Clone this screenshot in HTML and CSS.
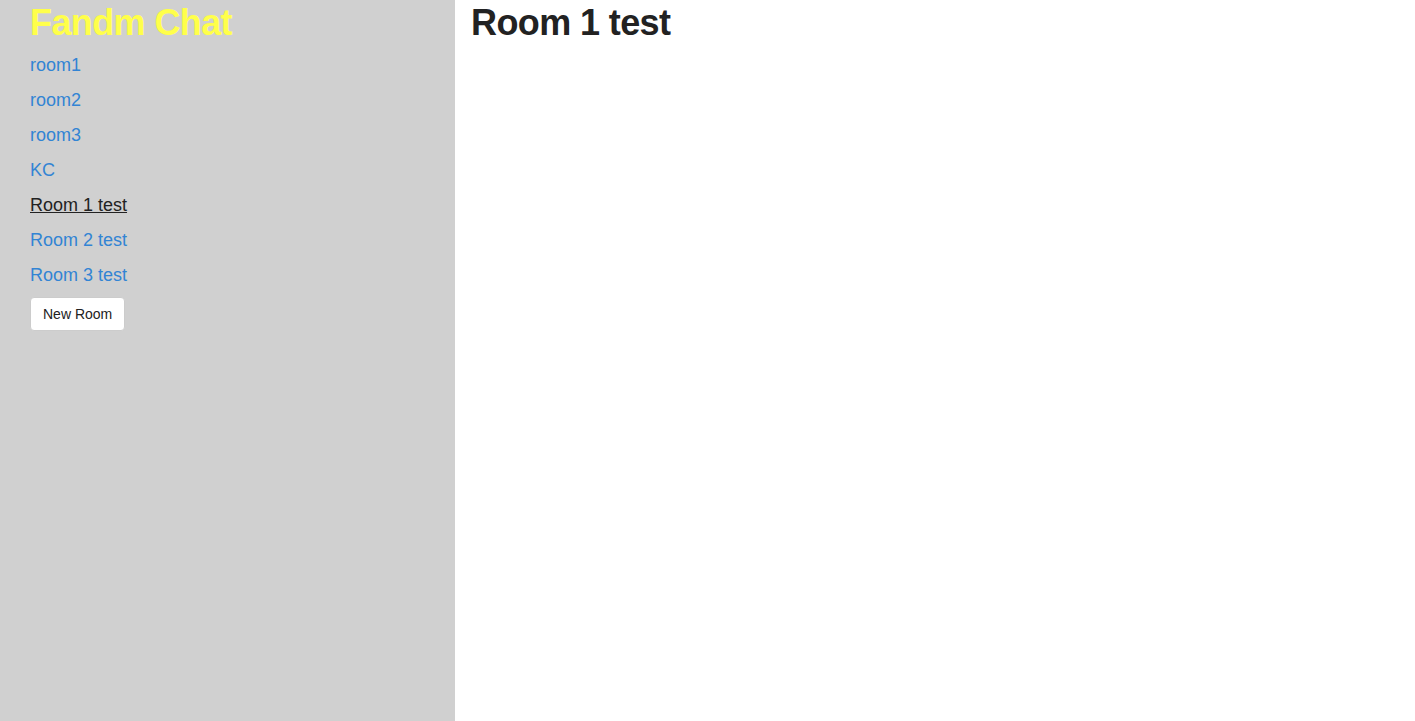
FILE: index.html
```html
<!DOCTYPE html>
<html>
<head>
<meta charset="utf-8">
<title>Fandm Chat</title>
<link rel="stylesheet" href="styles.css">
</head>
<body>
<div class="app">
  <aside class="sidebar">
    <h1 class="brand">Fandm Chat</h1>
    <ul class="rooms">
      <li><a href="#">room1</a></li>
      <li><a href="#">room2</a></li>
      <li><a href="#">room3</a></li>
      <li><a href="#">KC</a></li>
      <li><a href="#" class="active">Room 1 test</a></li>
      <li><a href="#">Room 2 test</a></li>
      <li><a href="#">Room 3 test</a></li>
    </ul>
    <button class="btn">New Room</button>
  </aside>
  <main class="main">
    <h1 class="room-title">Room 1 test</h1>
  </main>
</div>
</body>
</html>
```
FILE: styles.css
```css
html, body {
  margin: 0;
  padding: 0;
  height: 100%;
}
body {
  font-family: "Liberation Sans", Arial, sans-serif;
  color: #333;
  background: #fff;
}
.app {
  display: flex;
  height: 100%;
}
.sidebar {
  width: 455px;
  flex: none;
  background: #d0d0d0;
  padding: 3px 30px 0;
  box-sizing: border-box;
}
.brand {
  margin: 0 0 5px;
  font-size: 36px;
  line-height: 1.1;
  font-weight: 700;
  letter-spacing: -0.6px;
  color: #ffff4a;
}
.rooms {
  list-style: none;
  margin: 0;
  padding: 0;
}
.rooms li {
  line-height: 35px;
  font-size: 18px;
}
.rooms a {
  color: #3284d4;
  text-decoration: none;
}
.rooms a.active {
  color: #222;
  text-decoration: underline;
}
.btn {
  margin-top: 4px;
  font-family: "Liberation Sans", Arial, sans-serif;
  font-size: 14px;
  line-height: 20px;
  padding: 6px 12px;
  background: #fff;
  color: #222;
  border: 1px solid #ccc;
  border-radius: 4px;
}
.main {
  flex: 1;
  padding: 3px 16px 0;
}
.room-title {
  margin: 0;
  font-size: 36px;
  line-height: 1.1;
  font-weight: 700;
  letter-spacing: -0.6px;
  color: #222;
}
```
